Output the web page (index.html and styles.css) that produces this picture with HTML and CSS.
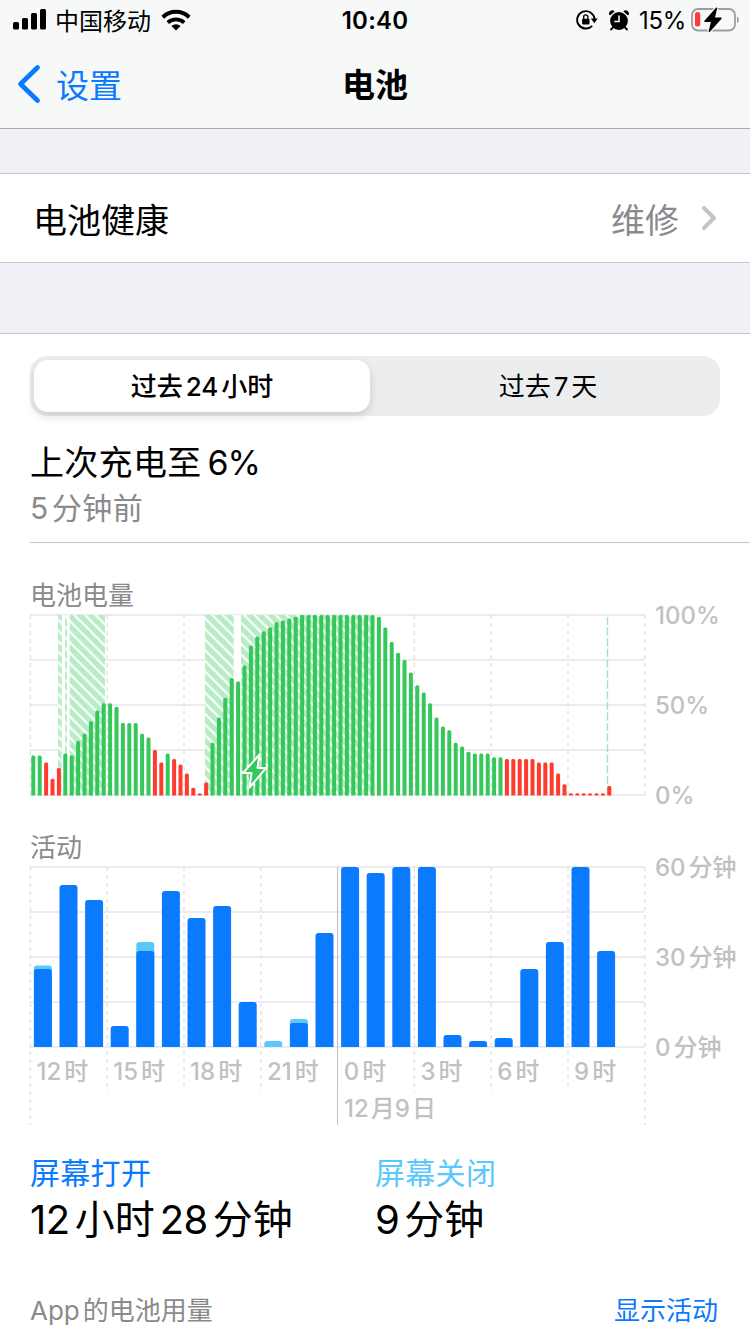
FILE: index.html
```html
<!DOCTYPE html>
<html lang="zh-CN">
<head>
  <meta charset="UTF-8" />
  <meta name="viewport" content="width=device-width, initial-scale=1" />
  <title>电池</title>
  <link rel="stylesheet" href="styles.css">
</head>
<body>

<header class="header">
  <div class="status">
    <div class="status-left">
      <svg width="34" height="22" viewBox="0 0 34 22">
        <rect x="0" y="13" width="6" height="7.5" rx="1.5"/>
        <rect x="9" y="9" width="6" height="11.5" rx="1.5"/>
        <rect x="18" y="4" width="6" height="16.5" rx="1.5"/>
        <rect x="27" y="0" width="6" height="20.5" rx="1.5"/>
      </svg>
      <span class="carrier">中国移动</span>
      <svg class="wifi" width="30" height="22" viewBox="0 0 30 22">
        <path d="M1.8 8.2a19 19 0 0 1 26.4 0" fill="none" stroke="#000" stroke-width="4"/>
        <path d="M6.8 13.6a12 12 0 0 1 16.4 0" fill="none" stroke="#000" stroke-width="3.8"/>
        <path d="M15 21.6l-4.6-4.6a6.6 6.6 0 0 1 9.2 0z"/>
      </svg>
    </div>
    <div class="time">10:40</div>
    <div class="status-right">
      <svg width="22" height="22" viewBox="0 0 22 22">
        <path d="M16.2 16.8a8.7 8.7 0 1 1 2.3-6.8" fill="none" stroke="#000" stroke-width="1.9"/>
        <path d="M14.8 9.5h6.9l-3.3 4.7z"/>
        <rect x="6.1" y="9.7" width="7.4" height="5.8" rx="1"/>
        <path d="M7.7 10V8a2.1 2.1 0 0 1 4.2 0v2" fill="none" stroke="#000" stroke-width="1.4"/>
      </svg>
      <svg class="alarm" width="20" height="21" viewBox="0 0 20 21">
        <circle cx="10" cy="11" r="8.9"/>
        <path d="M1 5.6A3 3 0 0 1 5.6 1.4zM19 5.6A3 3 0 0 0 14.4 1.4z"/>
        <path d="M4 17.5l-2 2M16 17.5l2 2" stroke="#000" stroke-width="1.8" stroke-linecap="round"/>
        <path d="M10 5.5v6H5.3" fill="none" stroke="#fff" stroke-width="1.5"/>
      </svg>
      <span class="percent">15%</span>
      <svg width="48" height="26" viewBox="0 0 48 26">
        <rect x="1" y="2" width="43" height="21.5" rx="6" fill="none" stroke="#9c9d9f" stroke-width="1.8"/>
        <path d="M46 9.5q2 1 2 3.3t-2 3.3z" fill="#9c9d9f"/>
        <rect x="4" y="5" width="5.2" height="14.5" rx="2.2" fill="#ff3b30"/>
        <path d="M25.5 1.2L14 14.3h6.8L18.4 24.2 30 11.2h-6.9z" stroke="#f7f9f9" stroke-width="4"/>
        <path d="M25.5 1.2L14 14.3h6.8L18.4 24.2 30 11.2h-6.9z" stroke="#000" stroke-width="1.4" stroke-linejoin="round"/>
      </svg>
    </div>
  </div>
  <nav class="nav">
    <a class="back">
      <svg width="26" height="40" viewBox="0 0 26 40">
        <path d="M21.5 3.5L4.5 20l17 16.5" fill="none" stroke="#0a7aff" stroke-width="4.8" stroke-linecap="round" stroke-linejoin="round"/>
      </svg>
      <span>设置</span>
    </a>
    <h1>电池</h1>
  </nav>
</header>

<div class="row">
  <span>电池健康</span>
  <span class="row-value">维修</span>
  <svg width="18" height="28" viewBox="0 0 18 28">
    <path d="M4 4l10 10L4 24" fill="none" stroke="#c4c4c7" stroke-width="4" stroke-linecap="round" stroke-linejoin="round"/>
  </svg>
</div>

<main class="panel">
  <div class="segmented">
    <div class="segment active">过去<span class="num">24</span>小时</div>
    <div class="segment">过去<span class="num">7</span>天</div>
  </div>

  <div class="last-charge">
    <div class="last-title">上次充电至<span class="num">6%</span></div>
    <div class="last-sub"><span class="num first">5</span>分钟前</div>
  </div>

  <h2 class="level-title">电池电量</h2>
  <svg id="level" class="chart" width="720" height="200" viewBox="30 605 720 200"></svg>

  <h2 class="activity-title">活动</h2>
  <svg id="activity" class="chart" width="720" height="280" viewBox="30 850 720 280"></svg>

  <div class="totals">
    <div class="total">
      <div class="total-label on">屏幕打开</div>
      <div class="total-value"><span class="num first">12</span>小时<span class="num">28</span>分钟</div>
    </div>
    <div class="total">
      <div class="total-label off">屏幕关闭</div>
      <div class="total-value"><span class="num first">9</span>分钟</div>
    </div>
  </div>

  <div class="usage">
    <span><span class="app">App</span>的电池用量</span>
    <a>显示活动</a>
  </div>
</main>

<script src="script.js"></script>
</body>
</html>
```

FILE: styles.css
```css
* {
  box-sizing: border-box;
}
body {
  margin: 0;
  width: 750px;
  height: 1334px;
  overflow: hidden;
  background: #f0f1f7;
  color: #000;
  font-family: Inter, "Noto Sans CJK SC", sans-serif;
}
svg {
  display: block;
  flex: none;
}
h1, h2 {
  margin: 0;
}

/* Barra superior */
.header {
  height: 129px;
  background: #f7f9f9;
  border-bottom: 1px solid #a9a9b1;
}
.status {
  display: grid;
  grid-template-columns: 1fr auto 1fr;
  height: 40px;
  padding: 0 11px 0 13px;
  align-items: center;
}
.status-left, .status-right {
  display: flex;
  align-items: center;
}
.status-right {
  justify-content: flex-end;
}
.carrier {
  padding-top: 3px;
  font-size: 24px;
  line-height: 37px;
  margin-left: 8px;
}
.wifi {
  margin-left: 10px;
}
.time {
  padding-top: 1px;
  margin-left: -2px;
  font-size: 24px;
  font-weight: 600;
  letter-spacing: 0.2px;
}
.alarm {
  margin-left: 11px;
}
.percent {
  padding-top: 1px;
  font-size: 24px;
  letter-spacing: -0.3px;
  margin: 0 5px 0 10px;
}
.nav {
  display: grid;
  grid-template-columns: 1fr auto 1fr;
  height: 88px;
  padding: 0 16px;
  align-items: center;
}
.back {
  display: flex;
  align-items: center;
  gap: 14px;
  color: #0a7aff;
  font-size: 33px;
}
.back span {
  padding-bottom: 1px;
}
.nav h1 {
  padding-bottom: 2px;
  font-size: 33px;
  font-weight: 600;
}

.row {
  display: flex;
  align-items: center;
  height: 90px;
  margin: 44px 0 70px;
  padding: 0 32px 0 33px;
  background: #fff;
  border-top: 1px solid #c5c5ca;
  border-bottom: 1px solid #c5c5ca;
  font-size: 34px;
}
.row-value {
  margin-left: auto;
  margin-right: 21px;
  color: #8a8a8e;
}

.panel {
  height: 1001px;
  padding: 22px 0 0 30px;
  background: #fff;
  border-top: 1px solid #c5c5ca;
}
.num {
  margin: 0 3px;
}
.num.first {
  margin-left: 0;
}
.segmented {
  display: flex;
  width: 690px;
  height: 60px;
  padding: 4px;
  border-radius: 17px;
  background: #ecedef;
}
.segment {
  flex: 1;
  padding: 1px 0 0 10px;
  border-radius: 14px;
  font-size: 26px;
  line-height: 52px;
  text-align: center;
}
.segment.active {
  flex: 0 0 336px;
  padding-left: 0;
  background: #fff;
  box-shadow: 0 4px 10px rgba(0, 0, 0, 0.14);
  font-weight: 500;
}
.last-charge {
  height: 127px;
  padding-top: 24px;
  border-bottom: 1px solid #c5c5ca;
}
.last-title {
  font-size: 34px;
  line-height: 46px;
  letter-spacing: 0.3px;
}
.last-title .num {
  margin-left: 6px;
  letter-spacing: -1.2px;
}
.last-sub {
  color: #8a8a8e;
  font-size: 30px;
  line-height: 45px;
  letter-spacing: 0.5px;
}
.panel h2 {
  color: #8a8a8e;
  font-size: 26px;
  font-weight: 400;
  line-height: 36px;
}
.level-title {
  margin-top: 35px;
}
.activity-title {
  margin-top: 25px;
}
.level-title + .chart {
  margin-top: -9px;
}
.activity-title + .chart {
  margin-top: -16px;
}

/* Gráficas */
.chart {
  overflow: visible;
}
.grid {
  stroke: #ececee;
  stroke-width: 2;
}
.tick {
  stroke: #e2e2e4;
  stroke-width: 1.4;
  stroke-dasharray: 4 4;
}
.midnight {
  stroke: #c2c2c4;
  stroke-width: 1;
}
.short-charge {
  stroke: #a3e4b5;
  stroke-width: 1.4;
  stroke-dasharray: 8 2.6;
}
.axis {
  fill: #c1c1c3;
  font-size: 24px;
  font-weight: 500;
}
.green {
  fill: #34c759;
}
.red {
  fill: #ff3b30;
}
.screen-on {
  fill: #0a7aff;
}
.screen-off {
  fill: #5ac8fa;
}

.totals {
  display: flex;
  margin-top: 23px;
}
.total {
  width: 345px;
}
.total-label {
  font-size: 30px;
  line-height: 40px;
  letter-spacing: 0.3px;
}
.total-label.on {
  color: #0a7aff;
}
.total-label.off {
  color: #5ac8fa;
}
.total-value {
  font-size: 40px;
  line-height: 53px;
}
.total-value .num {
  margin: 0 5px;
  letter-spacing: -0.5px;
}
.total-value .num.first {
  margin-left: 0;
}
.usage {
  display: flex;
  justify-content: space-between;
  margin-top: 45px;
  padding-right: 32px;
  color: #8a8a8e;
  font-size: 26px;
  line-height: 40px;
}
.app {
  margin-right: 3px;
}
.usage a {
  color: #0a7aff;
}
```

FILE: script.js
```js
const LEFT = 30.4;
const RIGHT = 644.5;
const SECTION = 76.8;

// battery level, one value every 15 minutes
const levels = [
  22, 22, 18, 9, 15, 23, 22, 30, 34, 41, 47, 51, 51, 49, 40, 40, 40, 34, 32,
  25, 18, 23, 20, 17, 12, 4, 1, 7, 29, 43, 54, 65, 63, 72, 83, 88, 91, 93, 96,
  97, 98, 99, 100, 100, 100, 100, 100, 100, 100, 100, 100, 100, 100, 100, 99,
  93, 85, 79, 75, 68, 61, 57, 51, 43, 38, 36, 29, 27, 24, 23, 23, 23, 21, 21,
  20, 20, 20, 20, 20, 18, 18, 18, 12, 6, 1, 1, 1, 1, 1, 1, 5
];
const low = i => (i >= 2 && i <= 4) || i === 19 || i === 20 || (i >= 22 && i <= 27) || i >= 74;

const charging = [[58, 3.8], [65, 2], [69.7, 35.3], [205, 28.7], [241, 133]];

// minutes per hour: [screen on, screen off]
const activity = [
  [26, 1.2], [54, 0], [49, 0], [7, 0], [32, 3], [52, 0], [43, 0], [47, 0],
  [15, 0], [0, 2], [8, 1.3], [38, 0], [60, 0], [58, 0], [60, 0], [60, 0],
  [4, 0], [2, 0], [3, 0], [26, 0], [35, 0], [60, 0], [32, 0]
];

function line(cls, x1, y1, x2, y2) {
  return `<line class="${cls}" x1="${x1}" y1="${y1}" x2="${x2}" y2="${y2}"/>`;
}

function text(x, y, str) {
  return `<text class="axis" x="${x}" y="${y}">${str}</text>`;
}

function bar(cls, x, base, w, h, r) {
  r = Math.min(r, h);
  return `<path class="${cls}" d="M${x} ${base}v${-(h - r)}q0 ${-r} ${r} ${-r}h${w - 2 * r}q${r} 0 ${r} ${r}v${h - r}z"/>`;
}

function horizontals(top) {
  let out = '';
  for (let i = 0; i <= 4; i++) {
    out += line('grid', 30, top + i * 45, RIGHT, top + i * 45);
  }
  return out;
}

function drawLevel() {
  let out = `<defs><pattern id="hatch" width="10.6" height="10.6" patternUnits="userSpaceOnUse">
    <rect width="10.6" height="10.6" fill="#b8ecc6"/>
    <path d="M-2 -2L12.6 12.6M-2 8.6L2 12.6M8.6 -2L12.6 2" stroke="#fff" stroke-width="2.2"/>
  </pattern></defs>`;
  out += horizontals(615);
  for (let i = 0; i <= 8; i++) {
    out += line('tick', LEFT + i * SECTION, 615, LEFT + i * SECTION, 795);
  }
  out += '<rect x="61.8" y="615" width="8" height="179" fill="#fff"/>';
  out += '<rect x="233.7" y="615" width="7.3" height="179" fill="#fff"/>';
  charging.forEach(([x, w]) => {
    out += `<rect x="${x}" y="615" width="${w}" height="180" fill="url(#hatch)"/>`;
  });
  out += line('short-charge', 607.5, 617, 607.5, 795);
  levels.forEach((v, i) => {
    out += bar(low(i) ? 'red' : 'green', 31.3 + i * 6.4, 795.5, 4, v * 1.8 + 0.5, 1.5);
  });
  out += '<path d="M259.5 754.5L243 773h8.5l-2 14.5L266 768h-8.5z" fill="#34c759" stroke="#fff" stroke-width="2" stroke-linejoin="round"/>';
  out += text(655, 624, '100%') + text(655, 714, '50%') + text(655, 804, '0%');
  document.getElementById('level').innerHTML = out;
}

function drawActivity() {
  let out = horizontals(867);
  for (let i = 0; i <= 8; i++) {
    const x = LEFT + i * SECTION;
    out += line('tick', x, 867, x, i % 8 === 0 ? 1125 : 1092);
  }
  out += line('midnight', 337.5, 867, 337.5, 1125);
  activity.forEach(([on, off], i) => {
    const x = 33.9 + i * 25.6;
    if (off) out += bar('screen-off', x, 1047, 18, (on + off) * 3, 3);
    if (on) out += bar('screen-on', x, 1047, 18, on * 3, 3);
  });
  ['12', '15', '18', '21', '0', '3', '6', '9'].forEach((h, i) => {
    out += text(36.5 + i * SECTION, 1080, `${h}<tspan dx="3">时</tspan>`);
  });
  out += text(344, 1117, '12<tspan dx="2">月</tspan><tspan dx="0">9</tspan><tspan dx="2">日</tspan>');
  ['60', '30', '0'].forEach((m, i) => {
    out += text(655, 876 + i * 90, `${m}<tspan dx="3">分钟</tspan>`);
  });
  document.getElementById('activity').innerHTML = out;
}

drawLevel();
drawActivity();
```
